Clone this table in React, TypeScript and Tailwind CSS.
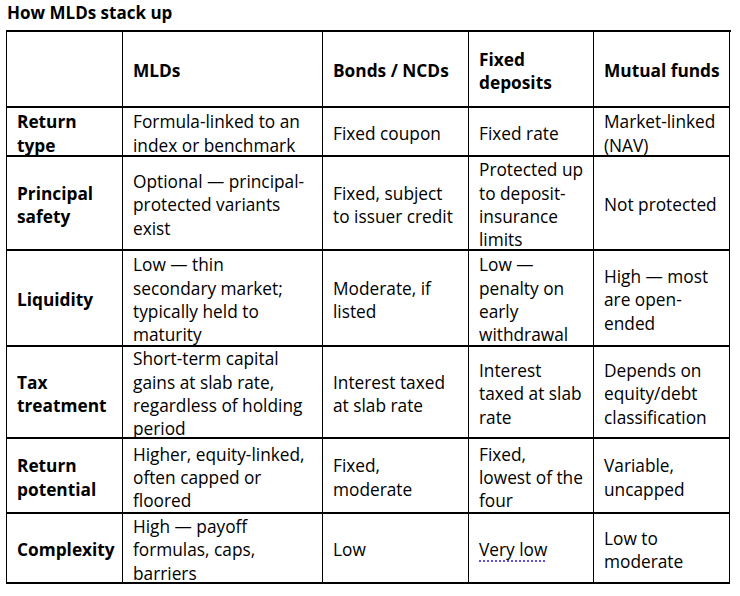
import React from "react";

const header = ["", "MLDs", "Bonds / NCDs", "Fixed|deposits", "Mutual funds"];

const rows: string[][] = [
  ["Return|type", "Formula-linked to an|index or benchmark", "Fixed coupon", "Fixed rate", "Market-linked|(NAV)"],
  [
    "Principal|safety",
    "Optional — principal-|protected variants|exist",
    "Fixed, subject|to issuer credit",
    "Protected up|to deposit-|insurance|limits",
    "Not protected",
  ],
  [
    "Liquidity",
    "Low — thin|secondary market;|typically held to|maturity",
    "Moderate, if|listed",
    "Low —|penalty on|early|withdrawal",
    "High — most|are open-|ended",
  ],
  [
    "Tax|treatment",
    "Short-term capital|gains at slab rate,|regardless of holding|period",
    "Interest taxed|at slab rate",
    "Interest|taxed at slab|rate",
    "Depends on|equity/debt|classification",
  ],
  [
    "Return|potential",
    "Higher, equity-linked,|often capped or|floored",
    "Fixed,|moderate",
    "Fixed,|lowest of the|four",
    "Variable,|uncapped",
  ],
  ["Complexity", "High — payoff|formulas, caps,|barriers", "Low", "@Very low", "Low to|moderate"],
];

function renderText(t: string) {
  if (t.startsWith("@")) {
    return (
      <span className="underline decoration-dotted decoration-[#5b4dff] decoration-[2px] underline-offset-[4px] [text-decoration-skip-ink:none]">
        {t.slice(1)}
      </span>
    );
  }
  const parts = t.split("|");
  return parts.map((p, i) => (
    <React.Fragment key={i}>
      {p}
      {i < parts.length - 1 && <br />}
    </React.Fragment>
  ));
}

export default function App() {
  const font = { fontFamily: '"Open Sans", "Liberation Sans", sans-serif' };
  return (
    <div className="w-[740px] h-[596px] bg-white text-black" style={font}>
      <div className="pl-[7px] pt-[2px] h-[30px] text-[17px] font-bold leading-[22px]">How MLDs stack up</div>
      <div className="ml-[6px] w-[725px] border-l border-t-2 border-black grid grid-cols-[116px_200px_146px_125px_136px] grid-rows-[76px_49px_94px_96px_92px_75px_70px]">
        {header.map((h, i) => (
          <div
            key={"h" + i}
            className="border-r border-b-2 border-black flex items-center pl-[10px] pr-[4px] whitespace-nowrap text-[17.3px] leading-[23.3px] font-bold"
          >
            <div className="translate-y-[2px]">{renderText(h)}</div>
          </div>
        ))}
        {rows.map((r, ri) =>
          r.map((c, ci) => (
            <div
              key={ri + "-" + ci}
              className={
                "border-r border-b-2 border-black flex items-center pl-[10px] pr-[4px] whitespace-nowrap text-[17.3px] leading-[23.3px] " +
                (ci === 0 ? "font-bold" : "font-normal")
              }
            >
              <div className="translate-y-[2px]">{renderText(c)}</div>
            </div>
          ))
        )}
      </div>
    </div>
  );
}
